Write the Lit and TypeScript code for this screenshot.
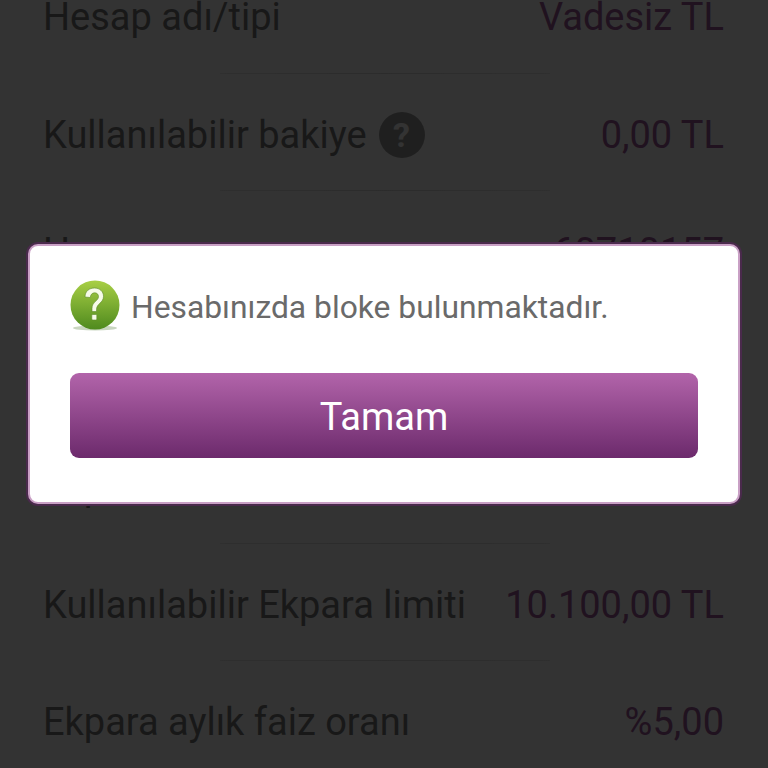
import { LitElement, html, css } from "lit";
import { customElement } from "lit/decorators.js";

const rows = [
  { label: "Hesap adı/tipi", value: "Vadesiz TL" },
  { label: "Kullanılabilir bakiye", value: "0,00 TL", help: true },
  { label: "Hesap numarası", value: "60710157" },
  { label: "IBAN", value: "" },
  { label: "Ekpara limiti", value: "10.100,00 TL" },
  { label: "Kullanılabilir Ekpara limiti", value: "10.100,00 TL" },
  { label: "Ekpara aylık faiz oranı", value: "%5,00" },
];

@customElement("app-root")
export class AppRoot extends LitElement {
  static styles = css`
    :host {
      display: block;
      width: 768px;
      height: 768px;
      overflow: hidden;
      position: relative;
      background: #fff;
      font-family: Roboto, "Liberation Sans", sans-serif;
    }
    .list {
      margin-top: -44px;
      display: flex;
      flex-direction: column;
      padding: 0 44px 0 43px;
    }
    .row {
      height: 116.5px;
      box-sizing: border-box;
      padding-top: 6px;
      display: flex;
      align-items: center;
      justify-content: space-between;
      font-size: 38px;
    }
    .sep {
      height: 1px;
      margin: 0 174px 0 177px;
      background: linear-gradient(90deg, #e8e8e8, #d8d8d8 50%, #e8e8e8);
    }
    .label {
      color: #7a7a7a;
      display: flex;
      align-items: center;
      gap: 12px;
    }
    .value {
      color: #a05a9c;
    }
    .help {
      width: 46px;
      height: 46px;
      border-radius: 50%;
      background: #9c9c9c;
      color: #fff;
      font-weight: 700;
      font-size: 34px;
      display: flex;
      align-items: center;
      justify-content: center;
    }
    .overlay {
      position: absolute;
      inset: 0;
      background: rgba(0, 0, 0, 0.8);
    }
    .dialog {
      position: absolute;
      left: 28px;
      top: 244px;
      width: 712px;
      height: 260px;
      box-sizing: border-box;
      background: #fff;
      border: 2px solid #c9a0c5;
      border-radius: 10px;
      box-shadow: 0 0 0 2px #4a2a4c;
      padding: 34px 40px 0;
      display: flex;
      flex-direction: column;
    }
    .msg {
      display: flex;
      align-items: center;
      gap: 11px;
      height: 52px;
      color: #6a6a6a;
      font-size: 31.8px;
    }
    .msg span {
      padding-top: 1px;
    }
    .btn {
      margin-top: 41px;
      height: 85px;
      border-radius: 9px;
      background: linear-gradient(#b264aa, #6c2a6c);
      color: #fff;
      font-size: 38px;
      padding-top: 3px;
      box-sizing: border-box;
      display: flex;
      align-items: center;
      justify-content: center;
    }
  `;

  render() {
    return html`
      <div class="list">
        ${rows.map(
          (r, i) => html`
            ${i ? html`<div class="sep"></div>` : ""}
            <div class="row">
              <div class="label">
                <span>${r.label}</span>
                ${r.help ? html`<span class="help">?</span>` : ""}
              </div>
              <div class="value">${r.value}</div>
            </div>
          `
        )}
      </div>
      <div class="overlay"></div>
      <div class="dialog">
        <div class="msg">
          <svg width="50" height="52" viewBox="0 0 50 52">
            <defs>
              <linearGradient id="g" x1="0" y1="0" x2="0" y2="1">
                <stop offset="0" stop-color="#a8cf45" />
                <stop offset="1" stop-color="#4f8a1e" />
              </linearGradient>
            </defs>
            <ellipse cx="25" cy="48" rx="22" ry="2.5" fill="#c9d6c0" />
            <circle cx="25" cy="25" r="24.5" fill="url(#g)" />
            <path
              d="M15 17c0-6 4.5-9 9.500-9s9 3.400 9 8.300c0 6.700-7 7.200-7 13.200v2h-4.500v-3c0-6.800 6.500-7.500 6.500-11.900 0-2.200-1.600-3.800-3.800-3.800-2.600 0-4.200 1.900-4.400 4.700z"
              fill="#f6fbe8"
              stroke="#5d8a2a"
              stroke-width=".6"
            />
            <rect x="21.800" y="34.500" width="5" height="5.500" rx="1" fill="#f6fbe8" stroke="#5d8a2a" stroke-width=".6" />
          </svg>
          <span>Hesabınızda bloke bulunmaktadır.</span>
        </div>
        <div class="btn">Tamam</div>
      </div>
    `;
  }
}
